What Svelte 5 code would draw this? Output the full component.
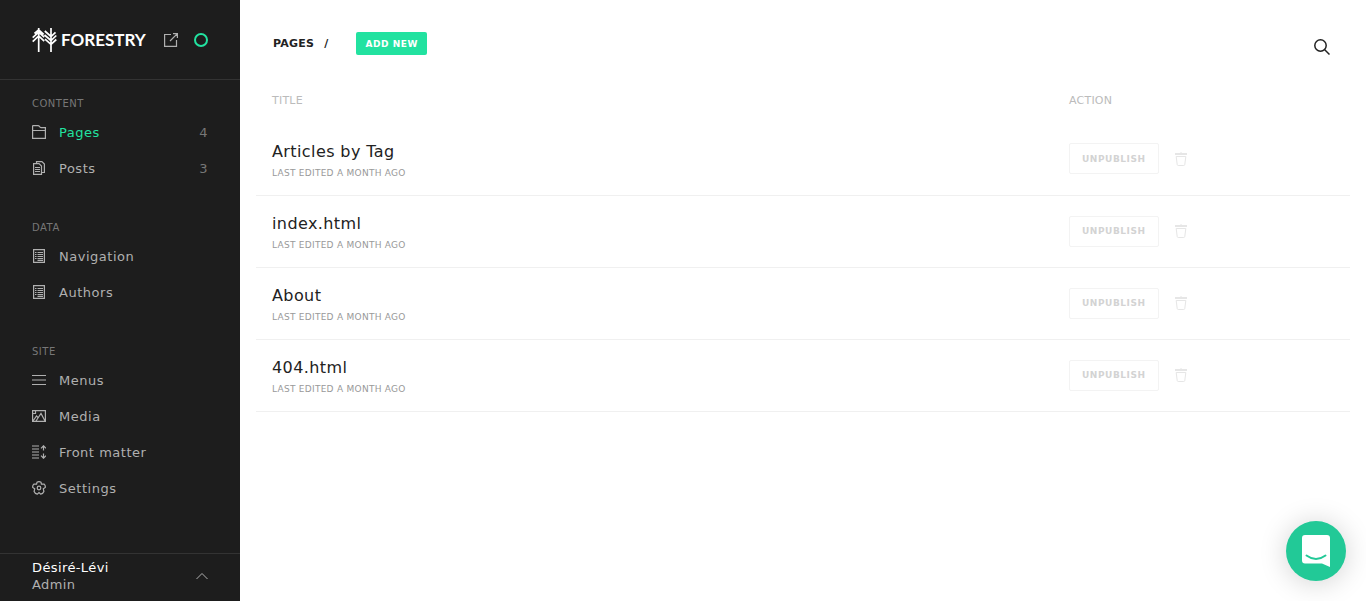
<!-- App.svelte -->
<script>
  const groups = [
    {
      title: 'Content',
      items: [
        { label: 'Pages', icon: 'folder', count: 4, active: true },
        { label: 'Posts', icon: 'posts', count: 3 },
      ],
    },
    {
      title: 'Data',
      items: [
        { label: 'Navigation', icon: 'data' },
        { label: 'Authors', icon: 'data' },
      ],
    },
    {
      title: 'Site',
      items: [
        { label: 'Menus', icon: 'menu' },
        { label: 'Media', icon: 'media' },
        { label: 'Front matter', icon: 'matter' },
        { label: 'Settings', icon: 'settings' },
      ],
    },
  ]

  const edited = 'Last edited a month ago'
  let pages = $state([
    { title: 'Articles by Tag', published: true },
    { title: 'index.html', published: true },
    { title: 'About', published: true },
    { title: '404.html', published: true },
  ])

  function removePage(page) {
    pages = pages.filter((p) => p !== page)
  }
</script>

{#snippet icon(name)}
  <svg class="icon" viewBox="0 0 14 14" aria-hidden="true">
    {#if name === 'folder'}
      <path d="M.6 13.4V1.100q0-.5.5-.5H6q1 0 1.500 1t1.500 1h4.400v10.800zM.6 5.500h13" />
    {:else if name === 'posts'}
      <path d="M4.500 2.500V.6h5.400l2.500 2.400v8.500H10M1.600 2.600h5.400l2.500 2.400v8.400H1.600zM3 6.500h5M3 8.500h5M3 10.500h5" />
    {:else if name === 'data'}
      <path d="M1.600.6h10.800v12.800H1.600zM3 3.500h1.500M5.500 3.500H11M3 5.500h1.500M5.500 5.500H11M3 7.500h1.500M5.500 7.500H11M3 9.500h1.500M5.500 9.500H11M5.500 11.300H11" />
    {:else if name === 'menu'}
      <path d="M0 2.500h14M0 7h14M0 11.500h14" />
    {:else if name === 'media'}
      <path d="M.6 1.600h12.800v10.800H.6zM1 12l3.500-5 1.500 1.500M4 12l5-7.500 4 7.500M1 4.500h2.500v-3" />
    {:else if name === 'matter'}
      <path d="M0 1h7M0 4h7M0 7h7M0 10h7M0 13h7M11.500 1v4.500M9 3.300l2.500-2.500L14 3.300M11.500 8.500V13M9 10.700l2.500 2.500 2.500-2.500" />
    {:else if name === 'settings'}
      <path
        d="M5 1.200Q7 0 9 1.200l.4 2 2.600-.1q1.600 1.200 1.300 3.300l-2 1.400.6 2.700q-.9 2.300-3.200 2.700L7 11.500l-1.700 1.700Q3 12.800 2.100 10.500l.6-2.700-2-1.400Q.4 4.300 2 3.100l2.600.1z"
      />
      <circle cx="7" cy="7" r="1.800" />
    {/if}
  </svg>
{/snippet}

<div class="app">
  <aside>
    <header class="brand">
      <a class="logo" href="#home">
        <svg viewBox="0 0 25 24" aria-hidden="true">
          <path d="M6.700 0v24M2.500 5.500l4.200-3.700 5 4.500M.7 9.700l6-5.500 5.500 5M.7 13.700l6-5.700 5.500 5.200" />
          <path d="M19 0v24M12.800 3l6.200 5.500 4.500-4.200M12.500 7l6.500 5.500 5.300-5M13 11.200l6 5.100 5.300-4.800" />
        </svg>
        <span>FORESTRY</span>
      </a>
      <a class="external" href="#site" aria-label="Open site">
        <svg class="icon" viewBox="0 0 14 14">
          <path d="M7 1.500H.6v11.900h11.900V7M6 8l7.400-7.400M9 .6h4.400V5" />
        </svg>
      </a>
      <span class="status"></span>
    </header>

    <nav>
      {#each groups as group}
        <section>
          <h2>{group.title}</h2>
          <ul>
            {#each group.items as item}
              <li>
                <a href="#{item.label}" class:active={item.active}>
                  {@render icon(item.icon)}
                  <span class="label">{item.label}</span>
                  {#if item.count}
                    <span class="count">{item.count}</span>
                  {/if}
                </a>
              </li>
            {/each}
          </ul>
        </section>
      {/each}
    </nav>

    <button class="user">
      <span>
        <span class="name">Désiré-Lévi</span>
        <span class="role">Admin</span>
      </span>
      <svg viewBox="0 0 12 8" aria-hidden="true"><path d="M.5 7L6 1.500 11.500 7" /></svg>
    </button>
  </aside>

  <main>
    <header class="toolbar">
      <h1>Pages <span>/</span></h1>
      <button class="add">Add new</button>
      <button class="search" aria-label="Search">
        <svg viewBox="0 0 16 16">
          <circle cx="6.500" cy="6.500" r="5.700" />
          <path d="M10.500 10.500l5 5" />
        </svg>
      </button>
    </header>

    <table>
      <thead>
        <tr>
          <th>Title</th>
          <th class="action">Action</th>
        </tr>
      </thead>
      <tbody>
        {#each pages as page}
          <tr>
            <td>
              <a class="title" href="#{page.title}">{page.title}</a>
              <span class="edited">{edited}</span>
            </td>
            <td>
              <div class="actions">
                <button class="publish" onclick={() => (page.published = !page.published)}>
                  {page.published ? 'Unpublish' : 'Publish'}
                </button>
                <button class="delete" aria-label="Delete" onclick={() => removePage(page)}>
                  <svg viewBox="0 0 12 14">
                    <path d="M0 1.500h12M0 2.500h12M6 0v1M1.200 4.500h9.600l-1 8q-.1 1-1 1H3.200q-.9 0-1-1z" />
                  </svg>
                </button>
              </div>
            </td>
          </tr>
        {/each}
      </tbody>
    </table>
  </main>

  <button class="chat" aria-label="Open chat">
    <svg viewBox="0 0 28 32">
      <path class="bubble" d="M3 0h22a3 3 0 0 1 3 3v29l-8-3.500H3a3 3 0 0 1-3-3V3a3 3 0 0 1 3-3z" />
      <path class="smile" d="M4.500 20.500q9.500 7 19 0" />
    </svg>
  </button>
</div>

<style>
  :global(body) {
    margin: 0;
    background: #fff;
  }
  .app {
    display: flex;
    min-height: 100vh;
    font-family: 'DejaVu Sans', sans-serif;
    color: #222;
  }
  button {
    font: inherit;
    border: 0;
    padding: 0;
    background: none;
    cursor: pointer;
  }
  a {
    color: inherit;
    text-decoration: none;
  }
  svg {
    display: block;
    fill: none;
    stroke: currentColor;
  }
  .icon {
    width: 14px;
    height: 14px;
    flex: none;
    stroke-width: 1.2;
  }

  aside {
    position: sticky;
    top: 0;
    display: flex;
    flex-direction: column;
    flex: none;
    width: 240px;
    height: 100vh;
    background: #1d1d1d;
    color: #b0b0b0;
  }
  .brand {
    display: flex;
    align-items: center;
    box-sizing: border-box;
    height: 80px;
    padding: 0 32px;
    border-bottom: 1px solid #333;
  }
  .logo {
    display: flex;
    align-items: center;
    gap: 4px;
    flex: 1;
    color: #fff;
    font: bold 17px/24px Lato, sans-serif;
  }
  .logo svg {
    width: 25px;
    height: 24px;
    stroke-width: 1.7;
  }
  .external {
    margin-right: 16px;
  }
  .status {
    box-sizing: border-box;
    width: 14px;
    height: 14px;
    border: 2px solid #22e2a0;
    border-radius: 50%;
  }

  nav {
    flex: 1;
    min-height: 0;
    overflow: hidden;
  }
  section {
    padding: 16px 32px 18px;
  }
  h2 {
    margin: 0 0 2px;
    font-size: 10px;
    font-weight: normal;
    line-height: 16px;
    letter-spacing: 0.05em;
    text-transform: uppercase;
    color: #777;
  }
  ul {
    margin: 0;
    padding: 0;
    list-style: none;
  }
  li a {
    display: flex;
    align-items: center;
    gap: 13px;
    height: 36px;
    font-size: 13px;
    letter-spacing: 0.04em;
  }
  .label {
    flex: 1;
  }
  .active .label {
    color: #22e2a0;
  }
  .count {
    color: #777;
  }

  .user {
    display: flex;
    align-items: center;
    justify-content: space-between;
    height: 48px;
    padding: 0 32px 4px;
    border-top: 1px solid #333;
    font-size: 13px;
    line-height: 17px;
    letter-spacing: 0.03em;
    text-align: left;
    color: #b0b0b0;
  }
  .name,
  .role {
    display: block;
  }
  .name {
    color: #fff;
  }
  .user svg {
    width: 12px;
    height: 8px;
  }

  main {
    flex: 1;
    padding: 0 16px;
  }
  .toolbar {
    display: flex;
    align-items: center;
    height: 87px;
    padding: 0 20px 0 17px;
  }
  h1 {
    margin: 0 28px 0 0;
    font-size: 11px;
    line-height: 16px;
    letter-spacing: 0.02em;
    text-transform: uppercase;
  }
  h1 span {
    margin-left: 6px;
  }
  .add {
    height: 23px;
    padding: 0 9px;
    border-radius: 2px;
    background: #22e2a0;
    color: #fff;
    font-size: 9px;
    font-weight: bold;
    letter-spacing: 0.06em;
    text-transform: uppercase;
  }
  .search {
    margin: 7px 0 0 auto;
  }
  .search svg {
    width: 16px;
    height: 16px;
    stroke: #222;
    stroke-width: 1.5;
  }

  table {
    width: 100%;
    border-collapse: collapse;
    table-layout: fixed;
  }
  th,
  td {
    padding: 0 16px;
    text-align: left;
  }
  th {
    height: 36px;
    box-sizing: border-box;
    vertical-align: top;
    font-size: 11px;
    font-weight: normal;
    line-height: 28px;
    letter-spacing: 0.02em;
    text-transform: uppercase;
    color: #bbb;
  }
  .action {
    width: 297px;
    box-sizing: border-box;
  }
  tbody tr {
    height: 72px;
    border-bottom: 1px solid #f0f0f0;
  }
  .title {
    display: block;
    padding-top: 4px;
    font-size: 16px;
    line-height: 24px;
    letter-spacing: 0.025em;
  }
  .edited {
    display: block;
    font-size: 9px;
    line-height: 18px;
    letter-spacing: 0.03em;
    text-transform: uppercase;
    color: #999;
  }
  .actions {
    display: flex;
    align-items: center;
    gap: 16px;
  }
  .publish {
    height: 31px;
    padding: 0 12px;
    border: 1px solid #f3f3f3;
    border-radius: 2px;
    font-size: 9px;
    font-weight: bold;
    letter-spacing: 0.06em;
    text-transform: uppercase;
    color: #d3d3d3;
  }
  .delete svg {
    width: 12px;
    height: 14px;
    stroke: #e6e6e6;
  }

  .chat {
    position: fixed;
    right: 20px;
    bottom: 20px;
    display: flex;
    align-items: center;
    justify-content: center;
    width: 60px;
    height: 60px;
    border-radius: 50%;
    background: #22c997;
    box-shadow: 0 2px 28px rgba(0, 0, 0, 0.18);
  }
  .chat svg {
    width: 28px;
    height: 32px;
  }
  .bubble {
    fill: #fff;
    stroke: none;
  }
  .smile {
    stroke: #22c997;
    stroke-width: 2;
    stroke-linecap: round;
  }
</style>
